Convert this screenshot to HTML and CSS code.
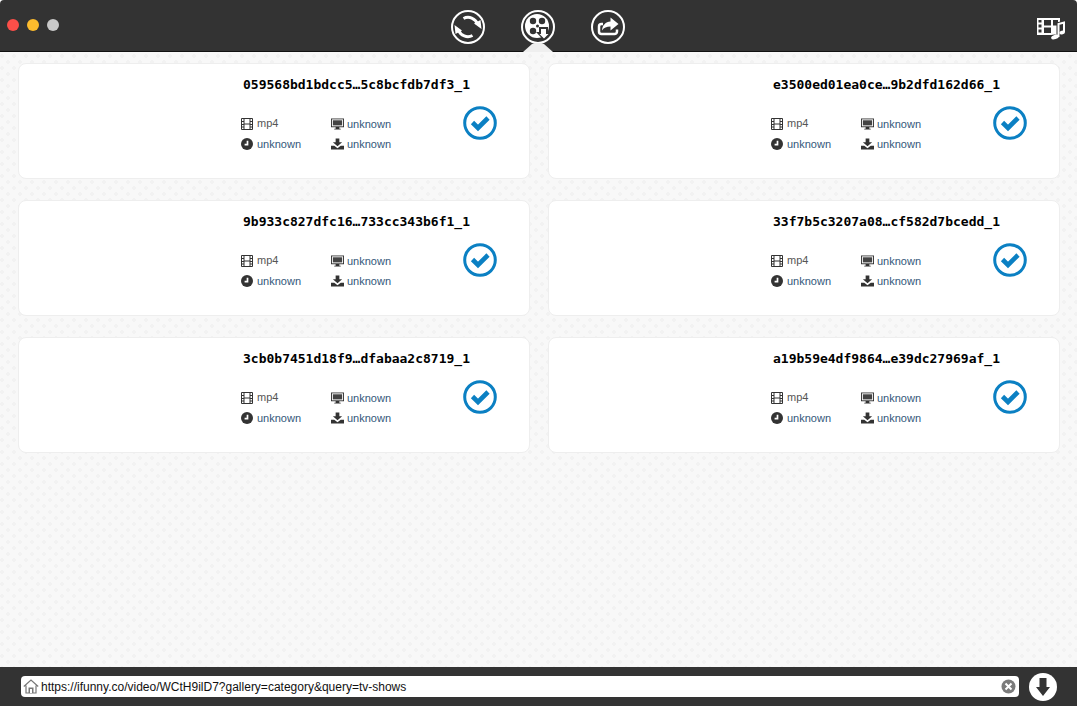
FILE: index.html
```html
<!DOCTYPE html>
<html lang="en">
<head>
<meta charset="utf-8">
<title>Downloader</title>
<link rel="stylesheet" href="styles.css">
</head>
<body>
<svg class="defs" width="0" height="0" aria-hidden="true">
  <symbol id="i-film" viewBox="0 0 12 12">
    <path fill="none" stroke="#333" stroke-width="1" d="M.5 .5h11v11H.5zM3 .5v11M9 .5v11M3 6h6"/>
    <path fill="#333" d="M0 3h3v1H0zM0 6h3v1H0zM0 8.500h3v1H0zM9 3h3v1H9zM9 6h3v1H9zM9 8.500h3v1H9z"/>
  </symbol>
  <symbol id="i-clock" viewBox="0 0 12 12">
    <circle cx="6" cy="6" r="6" fill="#333"/>
    <path fill="none" stroke="#fff" stroke-width="1.700" d="M6.500 2.800v3.800H3.600"/>
  </symbol>
  <symbol id="i-screen" viewBox="0 0 14 12">
    <path fill="#333" d="M0 0h14v9.500H9V11h1.500v1h-7v-1H5V9.500H0z"/>
    <path fill="#fff" d="M1 1h12v7.500H1z"/>
    <path fill="#444" d="M2 2h10v5.500H2z"/>
  </symbol>
  <symbol id="i-dl" viewBox="0 0 14 12">
    <path fill="#333" d="M5 0h4v4h3L7 8.500 2 4h3zM0 8h3.500L7 10.500 10.500 8H14v4H0z"/>
  </symbol>
  <symbol id="i-check" viewBox="0 0 34 34">
    <circle cx="17" cy="17" r="15.300" fill="#fff" stroke="#0b80c3" stroke-width="3"/>
    <path fill="none" stroke="#0b80c3" stroke-width="4.600" d="M9.500 16.500l5.500 5.500L25 12"/>
  </symbol>
</svg>

<div class="app">
  <header class="topbar">
    <div class="lights">
      <span class="light light-red"></span>
      <span class="light light-yellow"></span>
      <span class="light light-grey"></span>
    </div>
    <nav class="tabs">
      <svg class="tab" width="34" height="34" viewBox="0 0 34 34">
        <circle cx="17" cy="17" r="16" fill="none" stroke="#fff" stroke-width="2"/>
        <path fill="none" stroke="#fff" stroke-width="3" d="M12.500 8.500A10 10 0 0 1 26.500 14M21.500 25.500A10 10 0 0 1 7.500 20"/>
        <path fill="#fff" d="M23 13.500l6.500-3.500 1 9zM11 20.500l-6.500 3.500-1-9z"/>
      </svg>
      <svg class="tab" width="34" height="34" viewBox="0 0 34 34">
        <circle cx="17" cy="17" r="16" fill="none" stroke="#fff" stroke-width="2"/>
        <circle cx="16" cy="16" r="12" fill="#fff"/>
        <circle cx="12" cy="11" r="3.200" fill="#333"/>
        <circle cx="21" cy="11" r="3.200" fill="#333"/>
        <circle cx="12" cy="21" r="3.200" fill="#333"/>
        <circle cx="16.500" cy="16" r="1.500" fill="#333"/>
        <path fill="#333" d="M18 17h9v5h3l-7.500 8-7.500-8h3z"/>
        <path fill="#fff" d="M20 19h5v5h2.500l-4.500 4.500-4.500-4.500H20z"/>
      </svg>
      <svg class="tab" width="34" height="34" viewBox="0 0 34 34">
        <circle cx="17" cy="17" r="16" fill="none" stroke="#fff" stroke-width="2"/>
        <path fill="#fff" d="M19.500 7.500l8 6.500-8 6.500v-4c-4 0-6.500 1-8.500 4 .5-5.500 3.500-8.500 8.500-9z"/>
        <path fill="none" stroke="#fff" stroke-width="2.500" d="M12 14H10.500a2.500 2.500 0 0 0-2.500 2.500v5a2.500 2.500 0 0 0 2.500 2.500h13a2.500 2.500 0 0 0 2.500-2.500v-2"/>
      </svg>
    </nav>
    <svg class="media-icon" width="28" height="23" viewBox="0 0 28 23">
      <path fill="#fff" fill-rule="evenodd" d="M0 1h23v17H0zM1.500 3v2.500h3V3zm0 4.500v3h3v-3zm0 5v3h3v-3zM7 3v5.500h7V3zm9 0v5.500h5V3zM7 10.500V16h7v-5.500z"/>
      <path fill="none" stroke="#333" stroke-width="4" d="M21.500 19V7l5.500-1.500V15"/>
      <ellipse cx="17.500" cy="20" rx="4.500" ry="2.400" fill="#333"/>
      <path fill="none" stroke="#fff" stroke-width="2" d="M21.500 20V7l5.500-1.500V15"/>
      <ellipse cx="18" cy="20" rx="4" ry="2.200" fill="#fff" transform="rotate(-18 18 20)"/>
      <ellipse cx="25.200" cy="15.500" rx="2.800" ry="1.900" fill="#fff" transform="rotate(-18 25.200 15.500)"/>
    </svg>
    <span class="notch"></span>
  </header>

  <main class="content">
    <div class="grid">
      <article class="card">
        <div class="info">
          <h2 class="name">059568bd1bdcc5…5c8bcfdb7df3_1</h2>
          <div class="meta">
            <span class="row"><svg class="ic"><use href="#i-film"/></svg><span class="fmt">mp4</span></span>
            <span class="row"><svg class="ic ic-wide"><use href="#i-screen"/></svg><span class="val">unknown</span></span>
            <span class="row"><svg class="ic"><use href="#i-clock"/></svg><span class="val">unknown</span></span>
            <span class="row"><svg class="ic ic-wide"><use href="#i-dl"/></svg><span class="val">unknown</span></span>
          </div>
        </div>
        <svg class="check"><use href="#i-check"/></svg>
      </article>
      <article class="card">
        <div class="info">
          <h2 class="name">e3500ed01ea0ce…9b2dfd162d66_1</h2>
          <div class="meta">
            <span class="row"><svg class="ic"><use href="#i-film"/></svg><span class="fmt">mp4</span></span>
            <span class="row"><svg class="ic ic-wide"><use href="#i-screen"/></svg><span class="val">unknown</span></span>
            <span class="row"><svg class="ic"><use href="#i-clock"/></svg><span class="val">unknown</span></span>
            <span class="row"><svg class="ic ic-wide"><use href="#i-dl"/></svg><span class="val">unknown</span></span>
          </div>
        </div>
        <svg class="check"><use href="#i-check"/></svg>
      </article>
      <article class="card">
        <div class="info">
          <h2 class="name">9b933c827dfc16…733cc343b6f1_1</h2>
          <div class="meta">
            <span class="row"><svg class="ic"><use href="#i-film"/></svg><span class="fmt">mp4</span></span>
            <span class="row"><svg class="ic ic-wide"><use href="#i-screen"/></svg><span class="val">unknown</span></span>
            <span class="row"><svg class="ic"><use href="#i-clock"/></svg><span class="val">unknown</span></span>
            <span class="row"><svg class="ic ic-wide"><use href="#i-dl"/></svg><span class="val">unknown</span></span>
          </div>
        </div>
        <svg class="check"><use href="#i-check"/></svg>
      </article>
      <article class="card">
        <div class="info">
          <h2 class="name">33f7b5c3207a08…cf582d7bcedd_1</h2>
          <div class="meta">
            <span class="row"><svg class="ic"><use href="#i-film"/></svg><span class="fmt">mp4</span></span>
            <span class="row"><svg class="ic ic-wide"><use href="#i-screen"/></svg><span class="val">unknown</span></span>
            <span class="row"><svg class="ic"><use href="#i-clock"/></svg><span class="val">unknown</span></span>
            <span class="row"><svg class="ic ic-wide"><use href="#i-dl"/></svg><span class="val">unknown</span></span>
          </div>
        </div>
        <svg class="check"><use href="#i-check"/></svg>
      </article>
      <article class="card">
        <div class="info">
          <h2 class="name">3cb0b7451d18f9…dfabaa2c8719_1</h2>
          <div class="meta">
            <span class="row"><svg class="ic"><use href="#i-film"/></svg><span class="fmt">mp4</span></span>
            <span class="row"><svg class="ic ic-wide"><use href="#i-screen"/></svg><span class="val">unknown</span></span>
            <span class="row"><svg class="ic"><use href="#i-clock"/></svg><span class="val">unknown</span></span>
            <span class="row"><svg class="ic ic-wide"><use href="#i-dl"/></svg><span class="val">unknown</span></span>
          </div>
        </div>
        <svg class="check"><use href="#i-check"/></svg>
      </article>
      <article class="card">
        <div class="info">
          <h2 class="name">a19b59e4df9864…e39dc27969af_1</h2>
          <div class="meta">
            <span class="row"><svg class="ic"><use href="#i-film"/></svg><span class="fmt">mp4</span></span>
            <span class="row"><svg class="ic ic-wide"><use href="#i-screen"/></svg><span class="val">unknown</span></span>
            <span class="row"><svg class="ic"><use href="#i-clock"/></svg><span class="val">unknown</span></span>
            <span class="row"><svg class="ic ic-wide"><use href="#i-dl"/></svg><span class="val">unknown</span></span>
          </div>
        </div>
        <svg class="check"><use href="#i-check"/></svg>
      </article>
    </div>
  </main>

  <footer class="bottombar">
    <div class="urlbox">
      <svg class="home" width="16" height="15" viewBox="0 0 16 15">
        <path fill="none" stroke="#777" stroke-width="1.200" d="M.8 7.500L8 1l7.200 6.500M3 6.500V14h10V6.500"/>
        <path fill="#777" d="M5.500 8.500h5V14h-5z"/>
        <path fill="#fff" d="M7 10h2v4H7z"/>
      </svg>
      <span class="url">https://ifunny.co/video/WCtH9ilD7?gallery=category&amp;query=tv-shows</span>
      <svg class="clear" width="15" height="15" viewBox="0 0 15 15">
        <circle cx="7.500" cy="7.500" r="7" fill="#7b7b7b"/>
        <path stroke="#fff" stroke-width="2" d="M4.500 4.500l6 6M10.500 4.500l-6 6"/>
      </svg>
    </div>
    <button class="dl-btn" aria-label="Download">
      <svg width="14" height="18" viewBox="0 0 14 18"><path fill="#333" d="M3.500 0h7v9H14l-7 9-7-9h3.500z"/></svg>
    </button>
  </footer>
</div>
</body>
</html>
```

FILE: styles.css
```css
* { box-sizing: border-box; }

html, body {
  margin: 0;
  height: 100%;
  background: #fff;
  overflow: hidden;
}

.defs { position: absolute; }

.app {
  height: 706px;
  display: flex;
  flex-direction: column;
  font-family: "Liberation Sans", Arial, sans-serif;
}

.topbar {
  position: relative;
  flex: 0 0 52px;
  display: flex;
  align-items: center;
  justify-content: space-between;
  padding: 0 12px 1px 7px;
  background: #333;
  border-bottom: 1px solid #111;
  border-radius: 4px 4px 0 0;
}

.lights { display: flex; gap: 8px; margin-top: -1px; }

.light { width: 12px; height: 12px; border-radius: 50%; }
.light-red { background: #fc4f49; }
.light-yellow { background: #fdbc2d; }
.light-grey { background: #c9c9c9; }

.tabs {
  position: absolute;
  left: 451px;
  top: 10px;
  display: flex;
  gap: 36px;
}

.tab { display: block; }

.media-icon { display: block; margin-top: 7px; }

.notch {
  position: absolute;
  left: 523px;
  bottom: -1px;
  width: 30px;
  height: 9px;
  background: #efefef;
  clip-path: polygon(0 100%, 30% 12%, 40% 0, 60% 0, 70% 12%, 100% 100%);
}

.content {
  flex: 1;
  padding: 11px 18px 0;
  background-color: #f8f8f8;
  background-image:
    radial-gradient(circle, #f2f2f2 1.6px, transparent 2px),
    radial-gradient(circle, #f2f2f2 1.6px, transparent 2px);
  background-size: 12px 12px;
  background-position: 2px 4px, 8px 10px;
}

.grid {
  display: grid;
  grid-template-columns: 512px 512px;
  grid-auto-rows: 116px;
  column-gap: 18px;
  row-gap: 21px;
}

.card {
  display: flex;
  background: #fff;
  border: 1px solid #eee;
  border-radius: 8px;
  padding: 14px 32px 0 222px;
}

.info { flex: 1; min-width: 0; }

.name {
  margin: 0 0 0 2px;
  font-family: "DejaVu Sans Mono", "Liberation Mono", monospace;
  font-size: 13px;
  line-height: 14px;
  font-weight: 700;
  color: #000;
  white-space: nowrap;
}

.meta {
  display: grid;
  grid-template-columns: 90px 90px;
  grid-auto-rows: 20px;
  margin-top: 22px;
}

.row {
  display: flex;
  align-items: center;
  gap: 4px;
  font-size: 11px;
}

.ic { width: 12px; height: 12px; flex: none; }
.ic-wide { width: 13px; height: 12px; margin-right: -1px; }

.fmt { color: #555; position: relative; top: -1px; }
.val { color: #33587a; }

.check {
  width: 34px;
  height: 34px;
  flex: none;
  margin-top: 28px;
}

.bottombar {
  flex: 0 0 39px;
  display: flex;
  align-items: center;
  padding: 0 20px 0 21px;
  background: #333;
  gap: 10px;
}

.urlbox {
  flex: 1;
  height: 21px;
  display: flex;
  align-items: center;
  gap: 2px;
  padding: 0 3px 0 2px;
  background: #fff;
  border-radius: 4px;
}

.home { flex: none; }

.url {
  flex: 1;
  font-size: 12px;
  color: #111;
  white-space: nowrap;
}

.clear { flex: none; }

.dl-btn {
  width: 28px;
  height: 28px;
  flex: none;
  display: flex;
  align-items: center;
  justify-content: center;
  padding: 0;
  border: 0;
  border-radius: 50%;
  background: #fff;
}

.dl-btn svg { display: block; }
```
